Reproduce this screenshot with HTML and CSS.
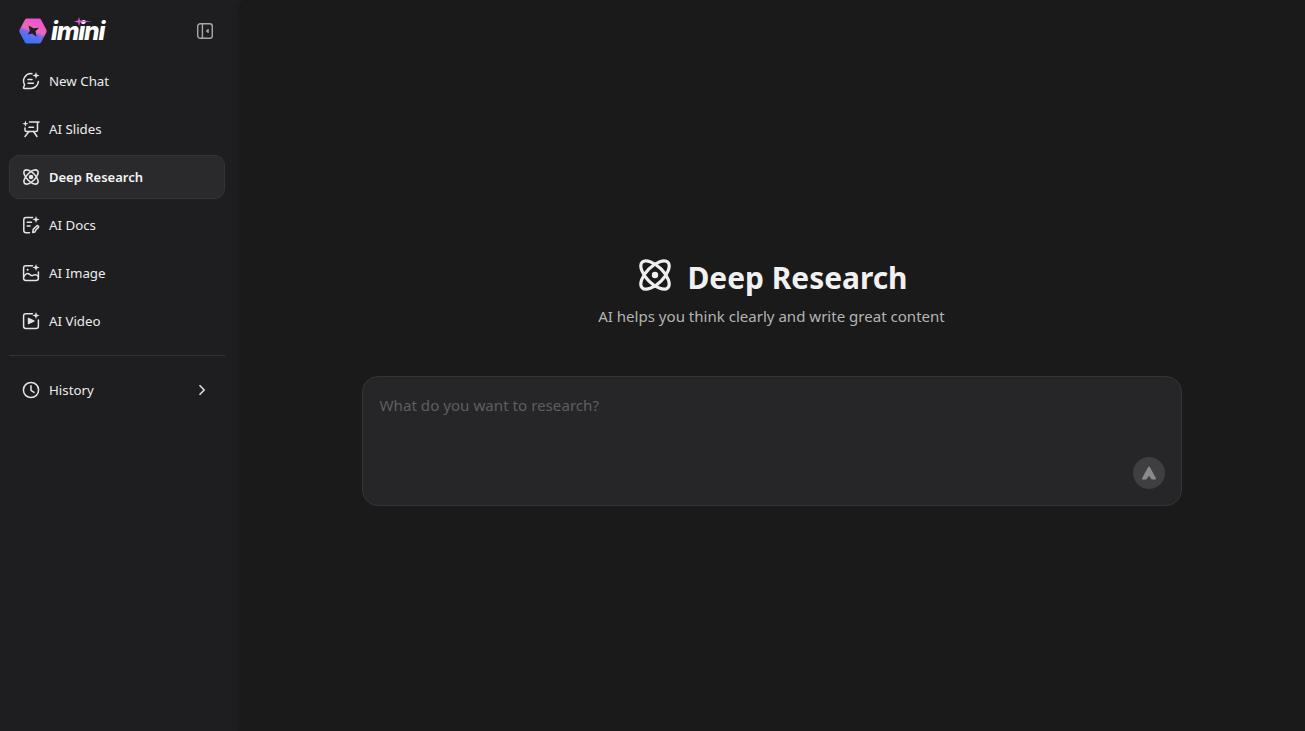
FILE: index.html
```html
<!DOCTYPE html>
<html lang="en">
<head>
<meta charset="utf-8">
<title>imini - Deep Research</title>
<link rel="stylesheet" href="styles.css">
</head>
<body>
<div class="app">
  <aside class="sidebar">
    <header class="brand">
      <div class="logo">
        <svg class="logo-mark" width="28" height="26" viewBox="0 0 28 26">
          <defs>
            <linearGradient id="hex" x1="0.7" y1="0" x2="0.3" y2="1">
              <stop offset="0" stop-color="#ee4fd8"/>
              <stop offset="0.48" stop-color="#ea6ab4"/>
              <stop offset="0.6" stop-color="#7468ee"/>
              <stop offset="1" stop-color="#2f74f5"/>
            </linearGradient>
          </defs>
          <path d="M8 .5 H20 Q21.4 .5 22.1 1.7 L27.3 11.6 Q28 13 27.3 14.4 L22.1 24.3 Q21.4 25.5 20 25.5 H8 Q6.6 25.5 5.9 24.3 L.7 14.4 Q0 13 .7 11.6 L5.9 1.7 Q6.6 .5 8 .5 Z" fill="url(#hex)"/>
          <path d="M9.5 7.5 L14.6 10.2 L20 9.8 L16.5 13.2 L17.5 18.8 L13.2 15.6 L8.8 16.6 L10.8 12.8 Z" fill="#1e1e20"/>
        </svg>
        <span class="logo-word">imini</span>
        <svg class="logo-star" width="18" height="9" viewBox="0 0 18 9"><path d="M5 0 L6 3.6 L18 4.5 L6 5.4 L5 9 L4 5.4 L0 4.5 L4 3.6 Z" fill="#d060d0"/></svg>
      </div>
      <button class="collapse" aria-label="Collapse sidebar">
        <svg width="16" height="16" viewBox="0 0 16 16" fill="none" stroke="#a8a8a8" stroke-width="1.4"><rect x=".7" y=".7" width="14.6" height="14.6" rx="2.6"/><path d="M5.4 1 V15"/><path d="M11.2 6.2 L9.4 8 L11.2 9.8 Z" fill="#a8a8a8" stroke-width="1"/></svg>
      </button>
    </header>
    <nav class="nav">
      <a class="nav-item"><svg class="ico" viewBox="0 0 18 18"><path d="M10 1.7 A7.3 7.3 0 0 0 2.6 12.6 L1.6 15.6 Q1.4 16.5 2.4 16.4 H9 A7.4 7.4 0 0 0 16.4 9.4"/><path d="M6 7.6 H10 M6 11.2 H11.4"/><path class="fill" d="M14 0 L14.9 2.6 L17.6 3.5 L14.9 4.4 L14 7 L13.1 4.4 L10.4 3.5 L13.1 2.6 Z"/></svg><span>New Chat</span></a>
      <a class="nav-item"><svg class="ico" viewBox="0 0 18 18"><path d="M7.5 2 H17 M15.5 2 V10 Q15.5 11.5 14 11.5 H4.5 Q3 11.5 3 10 V8"/><path d="M7 7.2 H11.5"/><path d="M7 11.5 L3 16.5 M11.5 11.5 L15 16.5"/><path class="fill" d="M3.4 .6 L4.2 2.9 L6.6 3.7 L4.2 4.5 L3.4 6.8 L2.6 4.5 L.2 3.7 L2.6 2.9 Z"/></svg><span>AI Slides</span></a>
      <a class="nav-item active"><svg class="ico ico-atom" viewBox="0 0 18 18"><use href="#atom"/></svg><span>Deep Research</span></a>
      <a class="nav-item"><svg class="ico" viewBox="0 0 18 18"><path d="M10.6 1.6 H4 Q1.8 1.6 1.8 3.8 V14.6 Q1.8 16.8 4 16.8 H7.5"/><path d="M5.2 6.2 H9.5 M5.2 10 H8"/><path d="M10.8 16.4 L11.2 13.4 L14.6 10 Q15.4 9.3 16.2 10 Q17 10.8 16.2 11.6 L13.8 14 L12.9 16 Z"/><path class="fill" d="M14 0 L14.9 2.6 L17.6 3.5 L14.9 4.4 L14 7 L13.1 4.4 L10.4 3.5 L13.1 2.6 Z"/></svg><span>AI Docs</span></a>
      <a class="nav-item"><svg class="ico" viewBox="0 0 18 18"><path d="M10.5 1.8 H3.8 Q1.6 1.8 1.6 4 V14.2 Q1.6 16.4 3.8 16.4 H14.2 Q16.4 16.4 16.4 14.2 V8"/><path d="M1.8 12.6 Q4.6 7.8 7.6 10.4 Q9.6 12.4 11.4 11.2 Q14 9.8 16.2 12.4"/><circle class="fill" cx="5.6" cy="5.8" r="1"/><path class="fill" d="M14 0 L14.9 2.6 L17.6 3.5 L14.9 4.4 L14 7 L13.1 4.4 L10.4 3.5 L13.1 2.6 Z"/></svg><span>AI Image</span></a>
      <a class="nav-item"><svg class="ico" viewBox="0 0 18 18"><path d="M10.5 1.8 H3.8 Q1.6 1.8 1.6 4 V14.2 Q1.6 16.4 3.8 16.4 H14.2 Q16.4 16.4 16.4 14.2 V8"/><path class="fill" d="M5.8 6.2 Q5.8 5.4 6.6 5.7 L12.4 8.5 Q13.1 9 12.4 9.5 L6.6 12.3 Q5.8 12.6 5.8 11.8 Z"/><path class="fill" d="M14 0 L14.9 2.6 L17.6 3.5 L14.9 4.4 L14 7 L13.1 4.4 L10.4 3.5 L13.1 2.6 Z"/></svg><span>AI Video</span></a>
    </nav>
    <div class="rule"></div>
    <a class="nav-item history"><svg class="ico" viewBox="0 0 18 18"><circle cx="9" cy="9" r="7.6"/><path d="M9 4.8 V9.4 L12 11.4"/></svg><span>History</span>
      <svg class="chev" width="8" height="12" viewBox="0 0 8 12" fill="none" stroke="#e4e4e4" stroke-width="1.5"><path d="M1.5 1.2 L6.2 6 L1.5 10.8"/></svg></a>
  </aside>
  <main class="main">
    <section class="hero">
      <h1 class="title"><svg class="title-ico" viewBox="0 0 18 18"><use href="#atom"/></svg><span class="title-text">Deep Research</span></h1>
      <p class="subtitle">AI helps you think clearly and write great content</p>
      <div class="composer">
        <div class="placeholder">What do you want to research?</div>
        <button class="send" aria-label="Send"><svg width="16" height="14" viewBox="0 0 16 14"><path d="M8 .4 Q8.6 .4 9 1.2 L15 12.6 Q15.4 13.6 14.4 13.6 H10.8 L8 9.8 L5.2 13.6 H1.6 Q.6 13.6 1 12.6 L7 1.2 Q7.4 .4 8 .4 Z" fill="#8a8a8c"/></svg></button>
      </div>
    </section>
  </main>
</div>
<svg class="defs" width="0" height="0">
  <symbol id="atom" viewBox="0 0 18 18">
    <g fill="none" stroke="currentColor" stroke-width="1.8">
      <ellipse cx="9" cy="9" rx="4.8" ry="10.2" transform="rotate(45 9 9)"/>
      <ellipse cx="9" cy="9" rx="4.8" ry="10.2" transform="rotate(-45 9 9)"/>
    </g>
    <circle cx="9" cy="9" r="1.8" fill="currentColor"/>
  </symbol>
</svg>
</body>
</html>
```
FILE: styles.css
```css
* { box-sizing: border-box; }
html, body { margin: 0; height: 100%; background: #1e1e20; overflow: hidden; }
body { font-family: "Noto Sans", "Open Sans", sans-serif; color: #e8e8e8; }
.app { display: flex; height: 731px; }
.sidebar { width: 238px; flex: none; padding: 0 13px 0 9px; background: #1e1e20; }
.brand { height: 59px; display: flex; align-items: center; justify-content: space-between; padding: 3px 12px 0 10px; }
.logo { position: relative; display: flex; align-items: center; gap: 4px; }
.logo-mark { display: block; }
.logo-word { font: italic 800 24.5px/28px "Inter", sans-serif; color: #fff; letter-spacing: -1.2px; }
.logo-star { position: absolute; left: 55px; top: 0; }
.collapse { width: 16px; height: 16px; padding: 0; border: 0; background: none; display: block; }
.collapse svg { display: block; }
.nav { display: flex; flex-direction: column; gap: 4px; }
.nav-item { height: 44px; display: flex; align-items: center; gap: 9px; padding-left: 12px; border: 1px solid transparent; border-radius: 10px; font-size: 13.3px; color: #ececec; }
.nav-item.active { background: #2a2a2c; border-color: #343436; font-weight: 600; font-size: 13px; color: #f4f4f4; }
.ico { width: 18px; height: 18px; flex: none; fill: none; stroke: #e4e4e4; stroke-width: 1.5; stroke-linecap: round; stroke-linejoin: round; color: #e4e4e4; }
.ico .fill { fill: #e4e4e4; stroke: none; }
.ico-atom { width: 16px; height: 16px; margin: 0 1px; }
.rule { height: 1px; margin-top: 12px; background: #343436; }
.history { margin-top: 12px; padding-right: 13px; }
.chev { margin-left: auto; margin-right: 5px; }
.main { flex: 1; min-width: 0; background: #1a1a1a; border-radius: 10px 0 0 0; box-shadow: 0 0 6px rgba(0,0,0,.12); }
.hero { display: flex; flex-direction: column; align-items: center; padding-top: 258px; }
.title { display: flex; align-items: center; gap: 16px; margin: 0; padding-left: 4px; height: 38px; font-size: 29.9px; line-height: 38px; font-weight: 700; color: #f1f1f1; }
.title-text { padding-top: 1px; }
.title-ico { width: 32px; height: 32px; color: #efefef; margin-top: -4px; }
.subtitle { margin: 9px 0 0; font-size: 15.05px; line-height: 22px; color: #b4b4b4; }
.composer { position: relative; width: 820px; height: 130px; margin-top: 49px; padding: 17px; background: #262628; border: 1px solid #353537; border-radius: 16px; }
.placeholder { font-size: 15.15px; line-height: 22px; color: #5e5e60; }
.send { position: absolute; right: 16px; bottom: 16px; width: 32px; height: 32px; padding: 0; border: 0; border-radius: 50%; background: #3f3f41; display: flex; align-items: center; justify-content: center; }
.defs { position: absolute; }
```
